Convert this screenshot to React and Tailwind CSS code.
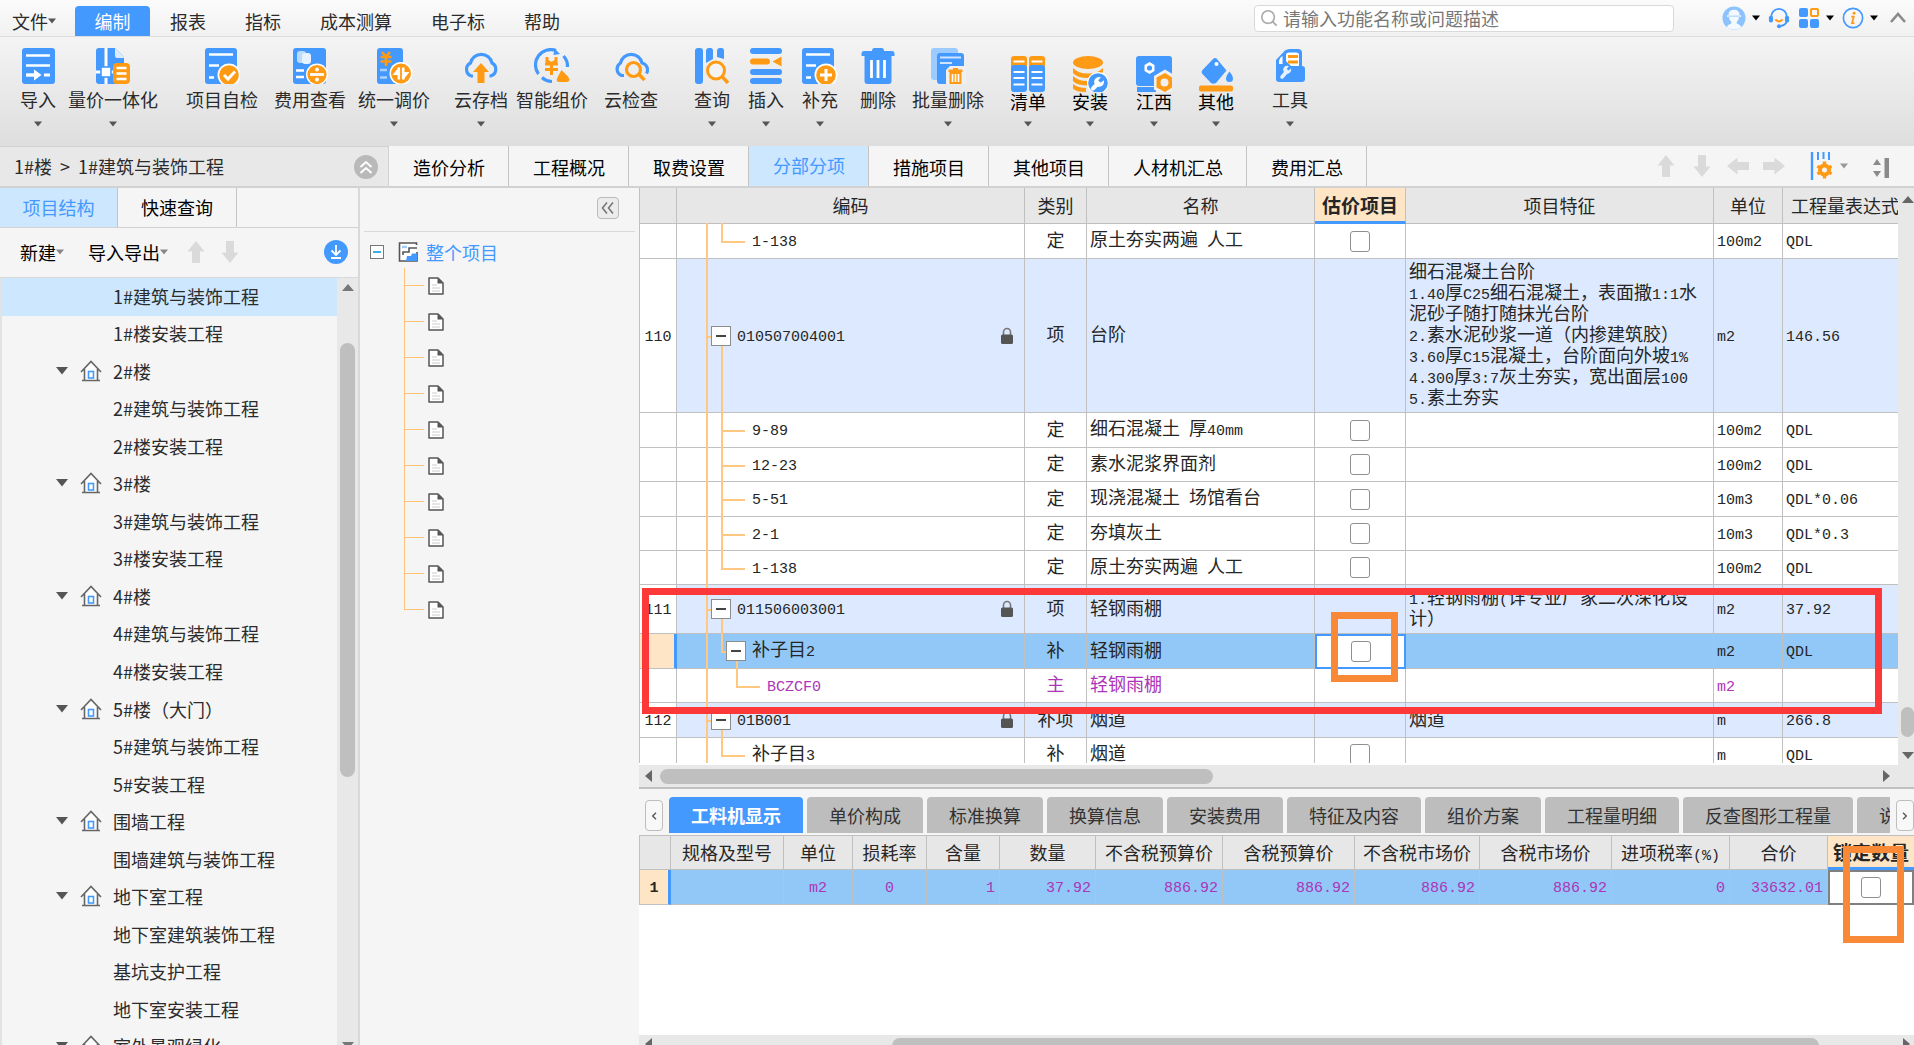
import React from "react";

const B = "#4499ff";
const O = "#ff9a14";

/* ---------- ribbon icons ---------- */
const Svg = ({ children }) => (
  <svg viewBox="0 0 36 36" className="block h-9 w-9 shrink-0" aria-hidden="true">{children}</svg>
);
const W = (d, w = 2.4, c = "#fff") => <path d={d} stroke={c} strokeWidth={w} fill="none" />;

const icons = {
  import: (
    <Svg>
      <rect x="2" y="0" width="33" height="36" rx="3" fill={B} />
      {W("M6 7.5H30M6 17.5H30")}
      {W("M6 27H14", 3.4)}
      {W("M24 27H30", 3)}
      <path d="M14 21.5L21.5 27L14 32.5Z" fill="#fff" />
    </Svg>
  ),
  integrate: (
    <Svg>
      <path d="M4 0H20L29 9V36H4Q1 36 1 33V3Q1 0 4 0Z" fill={B} />
      <path d="M20 0L30 10H22Q20 10 20 8Z" fill="#dcecff" />
      {W("M11 0V36M1 24H20", 3)}
      <rect x="6" y="19" width="10" height="10" fill="#fff" stroke={B} strokeWidth="1.6" />
      <rect x="18" y="15" width="17" height="21" rx="4" fill={O} />
      {W("M21.5 20H31.500M21.5 25.500H31.500M21.5 31H31.500", 2.6)}
    </Svg>
  ),
  check: (
    <Svg>
      <rect x="1" y="0" width="32" height="36" rx="3" fill={B} />
      {W("M5 6.500H29M5 17.500H15M5 29.500H10")}
      <circle cx="25" cy="27" r="11.500" fill="#fff" />
      <circle cx="25" cy="27" r="9.800" fill={O} />
      {W("M20 27L24 31L31 23.500", 3)}
    </Svg>
  ),
  fee: (
    <Svg>
      <rect x="1" y="0" width="33" height="36" rx="3" fill={B} />
      <rect x="5" y="3" width="9" height="12" rx="3" fill="#bcdcff" />
      <rect x="10" y="5" width="9" height="11" rx="3" fill="#e6f2ff" />
      {W("M4 22.500H12M4 29H12", 2.600)}
      <circle cx="25" cy="26.500" r="11" fill="#fff" />
      <circle cx="25" cy="26.500" r="9.600" fill={O} />
      {W("M18 26.500H32", 2.800)}
      <circle cx="25" cy="21.500" r="1.900" fill="#fff" />
      <circle cx="25" cy="31.500" r="1.900" fill="#fff" />
    </Svg>
  ),
  adjust: (
    <Svg>
      <rect x="1" y="0" width="26" height="36" rx="3" fill={B} />
      {W("M6 4L10 8.500L14 4M4.500 9H15.500M4.500 13.500H15.500M10 8V18", 2.600, O)}
      {W("M4 22H11M4 29.500H11", 2.400, "#a9d2ff")}
      <circle cx="25" cy="25.500" r="11.500" fill="#fff" />
      <circle cx="25" cy="25.500" r="10" fill={O} />
      {W("M22.800 19.500V31.500M27.200 19.500V31.500", 2.600)}
      <path d="M23 19L16.500 27H23ZM27 32L33.500 24H27Z" fill="#fff" />
    </Svg>
  ),
  cloudUp: (
    <Svg>
      <path d="M10 28.500H8.500A7 7 0 0 1 7.500 15.500A11 11 0 0 1 29 15.500A7 7 0 0 1 27.500 28.500H26.500" stroke={B} strokeWidth="3.200" fill="none" transform="translate(0 -0.500)" />
      <path d="M18 15L26 24H21.500V35H14.500V24H10Z" fill={O} />
    </Svg>
  ),
  smart: (
    <Svg>
      <path d="M4.500 26A15.300 15.300 0 0 1 22 2.500" stroke={B} strokeWidth="3.200" fill="none" />
      <path d="M20.500 0.500L26 6L19.500 7Z" fill={B} />
      <path d="M29.500 8A15 15 0 0 1 33.500 19M18 33.500A15 15 0 0 1 8 29.500" stroke={B} strokeWidth="3.200" fill="none" />
      {W("M13 9V13L17.500 15.500L22 13V9M11 16H24M11 21.500H24M17.500 15V27", 3, O)}
      <path d="M27.500 22L34 28.500Q37.500 33.500 33 34H25Q21 33.500 24 28.500Z" fill={O} />
    </Svg>
  ),
  cloudSearch: (
    <Svg>
      <path d="M11 28H8.500A7 7 0 0 1 7.500 15.500A11 11 0 0 1 29 15.500A7 7 0 0 1 33.500 26" stroke={B} strokeWidth="3.200" fill="none" transform="translate(0 -0.500)" />
      <circle cx="20.500" cy="21.500" r="7" stroke={O} strokeWidth="3.200" fill="none" />
      {W("M26 26.500L31.500 32", 3.600, O)}
    </Svg>
  ),
  query: (
    <Svg>
      <rect x="1" y="0" width="8" height="36" rx="3" fill={B} />
      <path d="M12 3Q12 0 15 0H16.500Q19 0 19 3V11L12 15Z" fill={B} />
      <path d="M23 3Q23 0 26 0H27.500Q30 0 30 3V11L23 9Z" fill={B} />
      <circle cx="22" cy="22.500" r="8.500" stroke={O} strokeWidth="3" fill="#f3f3f3" />
      {W("M28 28.500L34 35", 3.400, O)}
    </Svg>
  ),
  insert: (
    <Svg>
      {[0, 21, 30].map((y) => <rect key={y} x="2" y={y} width="32" height="6" rx="3" fill={B} />)}
      <rect x="2" y="10.500" width="20" height="6" rx="3" fill={O} />
      <path d="M24.500 13.500L33.500 8.500V18.500Z" fill={O} />
    </Svg>
  ),
  supplement: (
    <Svg>
      <rect x="0" y="0" width="32" height="36" rx="3" fill={B} />
      {W("M4 6.500H28M4 17.500H14M4 29.500H9")}
      <circle cx="24" cy="27" r="11.500" fill="#fff" />
      <circle cx="24" cy="27" r="9.800" fill={O} />
      {W("M18 27H30M24 21V33", 3)}
    </Svg>
  ),
  trash: (
    <Svg>
      <path d="M1.500 6Q1.500 3 4 3H12Q12 0 14.500 0H21.500Q24 0 24 3H32Q34.500 3 34.500 6V8H31.500V33Q31.500 36 28.500 36H7.500Q4.500 36 4.500 33V8H1.500Z" fill={B} />
      {W("M11.500 12V30M18 12V30M24.500 12V30", 2.800)}
    </Svg>
  ),
  batch: (
    <Svg>
      <rect x="1" y="0" width="27" height="32" rx="3" fill="#9ccbff" />
      <rect x="7" y="5" width="27" height="31" rx="3" fill={B} />
      {W("M10 9.500H31M10 15H22", 2.200, "#cfe5ff")}
      <path d="M16 36V22L20 18H36V36Z" fill="#f0f0f0" />
      <path d="M18.500 21.500H23V20H28V21.500H32.500V24H31.500V36H19.500V24H18.500Z" fill={O} />
      {W("M22.500 26V34M25.500 26V34M28.500 26V34", 1.700)}
    </Svg>
  ),
  list: (
    <Svg>
      {[1, 19].map((x) => (
        <g key={x}>
          <rect x={x} y="0" width="16" height="14" rx="3" fill={O} />
          <rect x={x} y="9" width="16" height="27" rx="3" fill={B} />
          <path d={`M${x + 2.500} 5.500H${x + 13.500}M${x + 2.500} 16H${x + 13.500}M${x + 2.500} 22H${x + 13.500}M${x + 2.500} 28.500H${x + 13.500}`} stroke="#fff" strokeWidth="2.200" />
        </g>
      ))}
    </Svg>
  ),
  install: (
    <Svg>
      <ellipse cx="16" cy="6.500" rx="15" ry="6.500" fill={O} />
      <path d="M1 12Q6 17.500 16 17.500Q26 17.500 31 12V16Q26 22 16 22Q5 22 1 17ZM1 20Q6 25 15 25V29.500Q4 29 1 25ZM1 28Q6 32 14 32V36Q4 36 1 32.500Z" fill={O} />
      <circle cx="26" cy="27" r="11" fill="#fff" />
      <circle cx="26" cy="27" r="9.800" fill={B} />
      <path d="M21 32.500L26 27.500" stroke="#fff" strokeWidth="4" strokeLinecap="round" />
      <path d="M31.800 24.200L28.600 26.800L26.200 24.400L28.800 21.200A5 5 0 1 0 31.800 24.200Z" fill="#fff" />
    </Svg>
  ),
  jiangxi: (
    <Svg>
      <path d="M3 0H33Q36 0 36 3V30H3Q0 30 0 27V3Q0 0 3 0Z" fill={B} />
      <path d="M1 33.500H20" stroke={B} strokeWidth="5" />
      <path d="M13.500 6L18.500 9V15L13.500 18L8.500 15V9Z" fill="#fff" />
      <circle cx="13.500" cy="12" r="2.600" fill={B} />
      <path d="M29 13.500L40 20V33.500L29 40L18 33.500V20Z" fill="#f0f0f0" />
      <path d="M29 17L36 21.500V31.500L29 36L20.500 31.500V21.500Z" fill={O} />
      <circle cx="28.500" cy="26.500" r="4" fill="#f0f0f0" />
    </Svg>
  ),
  other: (
    <Svg>
      <path d="M15.500 2.500Q17 1.500 18.500 2.500L28.500 14.500L18 27Q15.500 28.500 13 27L4 17.500Q3 15.500 4.500 14Z" fill={B} />
      <circle cx="18.500" cy="8" r="2" fill="#fff" />
      <path d="M31.500 15.500Q35 20 35 22.500A3.500 3.500 0 0 1 28 22.500Q28 20 31.500 15.500Z" fill={B} />
      <rect x="1" y="29.500" width="34" height="6" rx="2" fill={O} />
    </Svg>
  ),
  tool: (
    <Svg>
      <path d="M4 12L13 2.500Q15 1 18 1H26Q30 1 30 5V18Q33 18 33 21V31Q33 34 30 34H7Q4 34 4 31Z" fill={B} />
      <path d="M14 7Q14 4.500 17 4.500H24Q27 4.500 27 7V18H19L14 13Z" fill="#fff" />
      <path d="M16 8.500H26M16 14H26" stroke={O} strokeWidth="2.800" />
      <path d="M7 14Q7 10 10.500 8V16H7Z" fill="#fff" />
      <path d="M10 29L14 24.500" stroke="#e4f1ff" strokeWidth="3.600" strokeLinecap="round" />
      <path d="M19 20.500L16.500 22.500L14.800 21L16.800 18A4 4 0 1 0 19 20.500Z" fill="#e4f1ff" />
    </Svg>
  ),
};

const Down = ({ className = "text-[#555]" }) => (
  <svg viewBox="0 0 10 6" className={`block h-1.5 w-2 shrink-0 ${className}`} aria-hidden="true">
    <path d="M0 0H10L5 6Z" fill="currentColor" />
  </svg>
);

const Arrow = ({ dir }) => {
  const d = { up: 0, right: 90, down: 180, left: 270 }[dir];
  return (
    <svg viewBox="0 0 24 24" className="block h-6 w-6" aria-hidden="true">
      <path d="M12 1L20.500 11.500H16V23H8V11.500H3.500Z" fill="#dadada" transform={`rotate(${d} 12 12)`} />
    </svg>
  );
};

/* Grid cells set Latin runs in a half-width face next to full-width Chinese. */
const Mx = ({ t }) =>
  t.split(/([\x20-\x7e]+)/).map((s, i) =>
    i % 2 ? <span key={i} className="whitespace-pre font-['Liberation_Mono',monospace] text-[15px] leading-none">{s}</span> : s
  );

/* ---------- data ---------- */
const menus = ["报表", "指标", "成本测算", "电子标", "帮助"];

const ribbon = [
  ["导入", "import", "ml-5", true],
  ["量价一体化", "integrate", "ml-3", true],
  ["项目自检", "check", "ml-7", false],
  ["费用查看", "fee", "ml-4", false],
  ["统一调价", "adjust", "ml-3", true],
  ["云存档", "cloudUp", "ml-6", true],
  ["智能组价", "smart", "ml-2", false],
  ["云检查", "cloudSearch", "ml-4", false],
  ["查询", "query", "ml-9", true],
  ["插入", "insert", "ml-[18px]", true],
  ["补充", "supplement", "ml-[18px]", true],
  ["删除", "trash", "ml-[22px]", false],
  ["批量删除", "batch", "ml-4", true],
  ["清单", "list", "ml-[26px]", true, true],
  ["安装", "install", "ml-[26px]", true, true],
  ["江西", "jiangxi", "ml-7", true, true],
  ["其他", "other", "ml-[26px]", true, true],
  ["工具", "tool", "ml-[38px]", true],
];

const tabs = ["造价分析", "工程概况", "取费设置", "分部分项", "措施项目", "其他项目", "人材机汇总", "费用汇总"];

const tree = [
  [1, "1#建筑与装饰工程"], [1, "1#楼安装工程"],
  [0, "2#楼"], [1, "2#建筑与装饰工程"], [1, "2#楼安装工程"],
  [0, "3#楼"], [1, "3#建筑与装饰工程"], [1, "3#楼安装工程"],
  [0, "4#楼"], [1, "4#建筑与装饰工程"], [1, "4#楼安装工程"],
  [0, "5#楼（大门）"], [1, "5#建筑与装饰工程"], [1, "5#安装工程"],
  [0, "围墙工程"], [1, "围墙建筑与装饰工程"],
  [0, "地下室工程"], [1, "地下室建筑装饰工程"], [1, "基坑支护工程"], [1, "地下室安装工程"],
  [0, "室外景观绿化"],
];

/* kind: item (list item), sub (quota), last (final quota), subItem (expandable quota), leaf (main material) */
const rows = [
  { h: "h-[35px]", kind: "last", code: "1-138", type: "定", name: "原土夯实两遍 人工", unit: "100m2", qty: "QDL", box: true },
  {
    h: "h-[154px]", no: "110", kind: "item", code: "010507004001", type: "项", name: "台阶", unit: "m2", qty: "146.56",
    feat: ["细石混凝土台阶", "1.40厚C25细石混凝土，表面撒1:1水", "泥砂子随打随抹光台阶", "2.素水泥砂浆一道（内掺建筑胶）", "3.60厚C15混凝土，台阶面向外坡1%", "4.300厚3:7灰土夯实，宽出面层100", "5.素土夯实"],
  },
  { h: "h-[35px]", kind: "sub", code: "9-89", type: "定", name: "细石混凝土 厚40mm", unit: "100m2", qty: "QDL", box: true },
  { h: "h-[34px]", kind: "sub", code: "12-23", type: "定", name: "素水泥浆界面剂", unit: "100m2", qty: "QDL", box: true },
  { h: "h-[35px]", kind: "sub", code: "5-51", type: "定", name: "现浇混凝土 场馆看台", unit: "10m3", qty: "QDL*0.06", box: true },
  { h: "h-[34px]", kind: "sub", code: "2-1", type: "定", name: "夯填灰土", unit: "10m3", qty: "QDL*0.3", box: true },
  { h: "h-[34px]", kind: "last", code: "1-138", type: "定", name: "原土夯实两遍 人工", unit: "100m2", qty: "QDL", box: true },
  { h: "h-[49px]", no: "111", kind: "item", code: "011506003001", type: "项", name: "轻钢雨棚", unit: "m2", qty: "37.92", feat: ["1.轻钢雨棚(详专业厂家二次深化设", "计）"] },
  { h: "h-[35px]", kind: "subItem", code: "补子目2", type: "补", name: "轻钢雨棚", unit: "m2", qty: "QDL", box: true, selected: true },
  { h: "h-[34px]", kind: "leaf", code: "BCZCF0", type: "主", name: "轻钢雨棚", unit: "m2", qty: "" },
  { h: "h-[35px]", no: "112", kind: "item", code: "01B001", type: "补项", name: "烟道", unit: "m", qty: "266.8", feat: ["烟道"] },
  { h: "h-[34px]", kind: "last", code: "补子目3", type: "补", name: "烟道", unit: "m", qty: "QDL", box: true },
];

const detailTabs = ["工料机显示", "单价构成", "标准换算", "换算信息", "安装费用", "特征及内容", "组价方案", "工程量明细", "反查图形工程量", "说明信息"];

const detailCols = [
  ["规格及型号", "", "text-center"],
  ["单位", "m2", "text-center"],
  ["损耗率", "0", "text-center"],
  ["含量", "1", "text-right"],
  ["数量", "37.92", "text-right"],
  ["不含税预算价", "886.92", "text-right"],
  ["含税预算价", "886.92", "text-right"],
  ["不含税市场价", "886.92", "text-right"],
  ["含税市场价", "886.92", "text-right"],
  ["进项税率(%)", "0", "text-right"],
  ["合价", "33632.01", "text-right"],
];

/* ---------- grid pieces ---------- */
const Line = ({ className }) => <span className={`absolute bg-[#ffc77f] ${className}`} />;

const Toggle = ({ className }) => (
  <button aria-label="折叠" className={`absolute top-1/2 flex h-5 w-5 -translate-y-1/2 items-center justify-center border border-[#8c8c8c] bg-white ${className}`}>
    <span className="h-0.5 w-2.5 bg-[#444]" />
  </button>
);

const textPad = { item: "pl-[60px]", sub: "pl-[75px]", last: "pl-[75px]", subItem: "pl-[75px]", leaf: "pl-[90px]" };

function CodeCell({ row }) {
  const k = row.kind;
  return (
    <div className={`flex items-center justify-between pr-2.5 ${textPad[k]}`}>
      <Line className="-top-px bottom-0 left-[29px] w-0.5" />
      {k === "item" && (
        <>
          <Line className="left-[29px] top-1/2 h-0.5 w-1.5" />
          <Line className="bottom-0 left-11 top-1/2 w-0.5" />
          <Toggle className="left-[34px]" />
        </>
      )}
      {k === "sub" && <Line className="-top-px bottom-0 left-11 w-0.5" />}
      {(k === "last" || k === "subItem") && <Line className="-top-px bottom-1/2 left-11 w-0.5" />}
      {(k === "sub" || k === "last") && <Line className="left-11 top-1/2 h-0.5 w-6" />}
      {k === "subItem" && (
        <>
          <Line className="left-11 top-1/2 h-0.5 w-1.5" />
          <Line className="bottom-0 left-[59px] top-1/2 w-0.5" />
          <Toggle className="left-[49px]" />
        </>
      )}
      {k === "leaf" && (
        <>
          <Line className="-top-px bottom-1/2 left-[59px] w-0.5" />
          <Line className="left-[59px] top-1/2 h-0.5 w-6" />
        </>
      )}
      <span className="pb-1"><Mx t={row.code} /></span>
      {k === "item" && (
        <svg viewBox="0 0 14 18" className="h-[18px] w-3.5" aria-label="锁定">
          <path d="M3.500 8V5A3.500 3.500 0 0 1 10.500 5V8" stroke="#777" strokeWidth="1.600" fill="none" />
          <rect x="1" y="7.500" width="12" height="9.500" rx="1.500" fill="#555" />
        </svg>
      )}
    </div>
  );
}

const Check = ({ label }) => (
  <input type="checkbox" aria-label={label} className="block h-[21px] w-5 shrink-0 appearance-none rounded-[3px] border border-[#8f8f8f] bg-white" />
);

function MainGrid() {
  const head = "relative border-b border-r border-[#c0c0c0] p-0 font-normal";
  const plain = "relative border-b border-r border-[#c0c0c0] p-0";
  const text = "relative border-b border-r border-[#c0c0c0] p-0 pb-1";
  return (
    <table className="w-full table-fixed border-separate border-spacing-0 border-l border-[#c0c0c0] text-[18px] leading-[21px] text-[#262626]">
      <colgroup>
        <col className="w-[37px]" /><col className="w-[348px]" /><col className="w-[62px]" /><col className="w-[228px]" />
        <col className="w-[91px]" /><col className="w-[308px]" /><col className="w-[69px]" /><col />
      </colgroup>
      <thead>
        <tr className="h-9 bg-[#e7e7e7]">
          {["", "编码", "类别", "名称"].map((h) => <th key={h} scope="col" className={head}>{h}</th>)}
          <th scope="col" className="relative whitespace-nowrap border-b-3 border-r border-b-[#4499ff] border-r-[#c0c0c0] bg-[#fee5c6] p-0 text-[19px] font-bold">估价项目</th>
          <th scope="col" className={head}>项目特征</th>
          <th scope="col" className={head}>单位</th>
          <th scope="col" className="overflow-hidden whitespace-nowrap border-b border-[#c0c0c0] p-0 pl-2 text-left font-normal">工程量表达式</th>
        </tr>
      </thead>
      <tbody>
        {rows.map((r, i) => (
          <tr key={i} className={`${r.h} ${r.kind === "item" ? "bg-[#dce9fe]" : r.selected ? "bg-[#92c8f7]" : "bg-white"} ${r.kind === "leaf" ? "text-[#ac35b8]" : ""}`}>
            <td className={r.selected ? "border-b border-r-3 border-b-[#c0c0c0] border-r-[#4499ff] bg-[#fee5c6] p-0" : `${text} bg-white text-center`}>
              {r.no && <Mx t={r.no} />}
            </td>
            <td className={plain}><CodeCell row={r} /></td>
            <td className={`${text} text-center`}>{r.type}</td>
            <td className={`${text} whitespace-nowrap pl-[3px]`}><Mx t={r.name} /></td>
            <td className={r.selected ? "relative border-2 border-[#4499ff] bg-white p-0" : plain}>
              {r.box && <div className="flex justify-center"><Check label={`估价项目 ${r.name}`} /></div>}
              {r.selected && <span className="pointer-events-none absolute -top-6 right-1.5 z-10 h-[70px] w-[67px] border-[7px] border-[#f88937]" />}
            </td>
            <td className={`${text} pl-[3px]`}>
              {r.feat && r.feat.map((f) => <div key={f} className="h-[21px] whitespace-nowrap"><Mx t={f} /></div>)}
            </td>
            <td className={`${text} pl-[3px]`}><Mx t={r.unit} /></td>
            <td className="border-b border-[#c0c0c0] p-0 pb-1 pl-[3px]"><Mx t={r.qty} /></td>
          </tr>
        ))}
      </tbody>
    </table>
  );
}

function DetailGrid() {
  const cell = "border-b border-r border-[#c0c0c0] p-0";
  return (
    <table className="w-full table-fixed border-separate border-spacing-0 border-l border-t border-[#c0c0c0] text-[18px] leading-[21px] text-[#262626]">
      <colgroup>
        <col className="w-[31px]" /><col className="w-[113px]" /><col className="w-[69px]" /><col className="w-[74px]" /><col className="w-[73px]" />
        <col className="w-24" /><col className="w-[127px]" /><col className="w-[132px]" /><col className="w-[125px]" /><col className="w-[132px]" />
        <col className="w-[118px]" /><col className="w-[98px]" /><col />
      </colgroup>
      <thead>
        <tr className="h-[34px] bg-[#e7e7e7]">
          <th scope="col" aria-label="序号" className={cell} />
          {detailCols.map(([h]) => <th key={h} scope="col" className={`${cell} whitespace-nowrap font-normal`}><Mx t={h} /></th>)}
          <th scope="col" className="whitespace-nowrap border-b-3 border-[#4499ff] bg-[#fee5c6] p-0 text-[19px] font-bold">锁定数量</th>
        </tr>
      </thead>
      <tbody>
        <tr className="h-[35px] bg-[#92c8f7]">
          <th scope="row" className="border-b border-r-3 border-b-[#c0c0c0] border-r-[#4499ff] bg-[#fee5c6] p-0 pb-1 font-bold"><Mx t="1" /></th>
          {detailCols.map(([h, v, al]) => <td key={h} className={`border-b border-r border-[#c0c0c0] px-1 pb-1 pt-0 ${al} text-[#ac35b8]`}><Mx t={v} /></td>)}
          <td className="relative border-2 border-[#808080] bg-white p-0">
            <div className="flex justify-center"><Check label="锁定数量" /></div>
            <span className="pointer-events-none absolute -top-[26px] right-2 z-10 h-[97px] w-[61px] border-[7px] border-[#f88937]" />
          </td>
        </tr>
      </tbody>
    </table>
  );
}

/* ---------- page sections ---------- */
function TopBar() {
  return (
    <header className="flex h-[37px] shrink-0 items-end border-b border-[#dcdcdc] bg-gradient-to-b from-[#fbfbfb] to-[#f1f1f1] pl-3">
      <nav className="flex items-end">
        <button className="flex h-[30px] w-[63px] items-center"><span>文件</span><Down /></button>
        <button className="h-[30px] w-[75px] rounded-t bg-[#4499ff] text-white">编制</button>
        <div className="ml-5 flex gap-[39px]">
          {menus.map((m) => <button key={m} className="h-[30px]">{m}</button>)}
        </div>
      </nav>
      <label className="ml-auto mr-12 flex h-[27px] w-[420px] items-center gap-1 self-center rounded border border-[#d9d9d9] bg-white px-1">
        <svg viewBox="0 0 20 20" className="h-[18px] w-5 shrink-0" aria-hidden="true">
          <circle cx="9" cy="9" r="7" stroke="#aaa" strokeWidth="1.800" fill="none" />
          <path d="M14 14L18.500 18.500" stroke="#aaa" strokeWidth="2" />
        </svg>
        <input type="text" aria-label="搜索" placeholder="请输入功能名称或问题描述" className="min-w-0 flex-1 bg-transparent outline-none placeholder:text-[#777]" />
      </label>
      <div className="mr-2 flex items-center gap-2 self-center text-black">
        <button aria-label="账户" className="flex items-center gap-1.5">
          <svg viewBox="0 0 26 26" className="h-6 w-6"><circle cx="13" cy="13" r="12.500" fill="#8cc3ff" /><path d="M7 10Q7 4 13 4Q19 4 19 10H20.500V12H18.500Q18 16 16 17V19Q20 20 21 23Q17 25.500 13 25.500Q9 25.500 5 23Q6 20 10 19V17Q8 16 7.500 12H5.500V10Z" fill="#f4f9ff" /><path d="M7 11H19" stroke="#a9d2ff" strokeWidth="1.200" /></svg>
          <Down className="text-black" />
        </button>
        <button aria-label="客服">
          <svg viewBox="0 0 24 24" className="h-[22px] w-[22px]"><path d="M3.500 12V10.500A8.500 8.500 0 0 1 20.500 10.500V14Q20.500 20 13 21" stroke={B} strokeWidth="2" fill="none" /><rect x="1" y="9.500" width="4.500" height="7.500" rx="2" fill={B} /><rect x="18.500" y="9.500" width="4.500" height="7.500" rx="2" fill={B} /><circle cx="12" cy="21" r="2.200" fill={B} /><path d="M8 13.500Q12 18 16 13.500" stroke={O} strokeWidth="2.400" fill="none" /></svg>
        </button>
        <button aria-label="应用" className="flex items-center gap-1.5">
          <svg viewBox="0 0 22 22" className="h-[22px] w-[22px]"><rect x="1" y="1" width="9" height="9" rx="2" fill={B} /><rect x="1" y="12" width="9" height="9" rx="2" fill={B} /><rect x="12" y="12" width="9" height="9" rx="2" fill={B} /><rect x="13" y="2" width="7" height="7" rx="1" fill="none" stroke={O} strokeWidth="2" /></svg>
          <Down className="text-black" />
        </button>
        <button aria-label="信息" className="flex items-center gap-1.5">
          <svg viewBox="0 0 24 24" className="h-[22px] w-[22px]"><circle cx="12" cy="12" r="10.500" stroke={B} strokeWidth="1.800" fill="none" /><circle cx="13.200" cy="6.800" r="1.600" fill={O} /><path d="M10 10.500H12.800L11 17.500H13.500" stroke={O} strokeWidth="2" fill="none" /></svg>
          <Down className="text-black" />
        </button>
        <button aria-label="收起">
          <svg viewBox="0 0 16 16" className="ml-1 h-4 w-4"><path d="M1 12L8 4L15 12" stroke="#8a8a8a" strokeWidth="2.600" fill="none" /></svg>
        </button>
      </div>
    </header>
  );
}

function Ribbon() {
  return (
    <div className="flex h-[109px] shrink-0 items-start overflow-hidden bg-gradient-to-b from-[#f4f4f4] to-[#dedede] pt-[11px]">
      {ribbon.map(([label, icon, gap, menu, dark]) => (
        <button key={label} className={`flex shrink-0 flex-col items-center ${gap} ${dark ? "text-black" : ""}`}>
          <span className={dark ? "h-[39px] pt-2" : "h-[39px]"}>{icons[icon]}</span>
          <span className={`relative whitespace-nowrap leading-6 ${dark ? "mt-0.5" : ""}`}>{label}</span>
          {menu && <span className={dark ? "mt-2" : "mt-2.5"}><Down /></span>}
        </button>
      ))}
    </div>
  );
}

function TabRow() {
  return (
    <div className="flex h-[42px] shrink-0 border-b-2 border-[#d2d2d2] bg-[#f5f5f5]">
      <div className="flex w-[389px] shrink-0 items-center justify-between border-r border-t border-[#d2d2d2] bg-[#e8e8e8] pl-3.5 pr-2.5">
        <div className="flex gap-2 pb-0.5">
          <span>1#楼</span><span>&gt;</span><span>1#建筑与装饰工程</span>
        </div>
        <button aria-label="折叠路径" className="flex h-6 w-6 items-center justify-center rounded-full bg-[#b9b9b9]">
          <svg viewBox="0 0 16 16" className="h-4 w-4"><path d="M2.500 8L8 3L13.500 8M2.500 14L8 9L13.500 14" stroke="#fff" strokeWidth="2" fill="none" /></svg>
        </button>
      </div>
      <div className="flex">
        {tabs.map((t, i) => (
          <button key={t} className={`whitespace-nowrap border-r border-[#c4c4c4] pl-6 pr-[23px] ${i === 3 ? "bg-[#cce7fe] pb-0.5 text-[#4499ff]" : "pt-0.5 text-black"}`}>{t}</button>
        ))}
      </div>
      <div className="ml-auto flex items-center gap-3 pr-6">
        {["up", "down", "left", "right"].map((d) => <button key={d} aria-label={d}><Arrow dir={d} /></button>)}
        <button aria-label="列设置" className="ml-3 flex items-center gap-2">
          <svg viewBox="0 0 22 28" className="h-7 w-[22px]"><path d="M2 0V28" stroke={B} strokeWidth="2.400" /><path d="M8 0V8M13.500 0V7M19 0V8" stroke={B} strokeWidth="2" /><circle cx="14.500" cy="18" r="4.500" fill="none" stroke={O} strokeWidth="4" /><path d="M14.500 9.500V12M14.500 24V26.500M7.500 14L9.500 15.500M19.500 20.500L21.500 22M7.500 22L9.500 20.500M19.500 15.500L21.500 14" stroke={O} strokeWidth="3.400" /></svg>
          <Down className="text-[#999]" />
        </button>
        <button aria-label="行高" className="ml-3 mt-1">
          <svg viewBox="0 0 18 24" className="h-6 w-[18px]"><path d="M1 9L5 3L9 9ZM1 15L5 21L9 15Z" fill="#8a8a8a" /><rect x="12.500" y="2" width="4.500" height="20" fill="#8a8a8a" /></svg>
        </button>
      </div>
    </div>
  );
}

function Sidebar() {
  return (
    <aside className="flex w-[360px] shrink-0 flex-col border-r-2 border-[#d9d9d9]">
      <div className="flex h-10 shrink-0 border-b border-[#d2d2d2] text-black">
        <button className="w-[118px] border-r border-[#c4c4c4] bg-[#cce7fe] pb-0.5 text-[#4499ff]">项目结构</button>
        <button className="w-[119px] border-r border-[#c4c4c4] pb-0.5">快速查询</button>
      </div>
      <div className="flex h-[50px] shrink-0 items-center border-b border-[#d9d9d9] pb-0.5 pl-5 pr-2.5 text-black">
        <button className="flex items-center">新建<Down className="text-[#888]" /></button>
        <button className="ml-6 flex items-center">导入导出<Down className="text-[#888]" /></button>
        <button aria-label="上移" className="ml-4"><Arrow dir="up" /></button>
        <button aria-label="下移" className="ml-2.5"><Arrow dir="down" /></button>
        <button aria-label="下载" className="ml-auto flex h-6 w-6 items-center justify-center rounded-full bg-[#4499ff]">
          <svg viewBox="0 0 16 16" className="h-4 w-4"><path d="M8 1V11M3.500 6.500L8 11L12.500 6.500M3 14H13" stroke="#fff" strokeWidth="1.800" fill="none" /></svg>
        </button>
      </div>
      <div className="flex min-h-0 flex-1 overflow-hidden">
        <ul className="grid h-[788px] flex-1 auto-rows-fr border-l-2 border-[#e2e2e2]">
          {tree.map(([lvl, t], i) => (
            <li key={t} className={`flex items-center pb-0.5 ${i === 0 ? "bg-[#cce7fe]" : ""} ${lvl ? "pl-[111px]" : "pl-[54px]"}`}>
              {!lvl && (
                <>
                  <svg viewBox="0 0 12 8" className="h-2 w-3" aria-hidden="true"><path d="M0 0H12L6 7.500Z" fill="#555" /></svg>
                  <svg viewBox="0 0 22 22" className="ml-3 mr-[11px] h-[22px] w-[22px]" aria-hidden="true">
                    <path d="M4.500 10V20.500H17.500V10L11 3Z" fill="#fff" />
                    <path d="M1 12L11 1.500L21 12M4.500 9V20.500M17.500 9V20.500M2 20.500H20" stroke="#666" strokeWidth="1.600" fill="none" />
                    <rect x="8.500" y="11.500" width="5" height="6.500" stroke={B} strokeWidth="1.600" fill="#fff" />
                  </svg>
                </>
              )}
              <span className="whitespace-nowrap">{t}</span>
            </li>
          ))}
        </ul>
        <div className="flex w-[21px] flex-col items-center bg-[#e8e8e8] pt-1.5">
          <svg viewBox="0 0 12 7" className="h-[7px] w-3 shrink-0" aria-hidden="true"><path d="M0 7H12L6 0Z" fill="#777" /></svg>
          <div className="mt-[52px] h-[434px] w-[15px] rounded-full bg-[#bfbfbf]" />
          <svg viewBox="0 0 12 7" className="mb-[-4px] mt-auto h-[7px] w-3 shrink-0" aria-hidden="true"><path d="M0 0H12L6 7Z" fill="#777" /></svg>
        </div>
      </div>
    </aside>
  );
}

function ProjectTree() {
  return (
    <section className="flex w-[279px] shrink-0 flex-col">
      <div className="mx-1 flex h-11 items-center justify-end border-b border-[#d9d9d9] pr-4">
        <button aria-label="收起面板" className="mb-1 flex h-[22px] w-[22px] items-center justify-center rounded border border-[#bbb] bg-[#ececec]">
          <svg viewBox="0 0 16 16" className="h-4 w-4"><path d="M7 2.500L2.500 8L7 13.500M13 2.500L8.500 8L13 13.500" stroke="#777" strokeWidth="1.600" fill="none" /></svg>
        </button>
      </div>
      <div className="flex h-9 items-center pl-2.5 pt-1">
        <button aria-label="折叠" className="flex h-3.5 w-3.5 items-center justify-center border border-[#777] bg-white"><span className="h-0.5 w-2 bg-[#3ab0e0]" /></button>
        <svg viewBox="0 0 20 20" className="ml-3.5 h-5 w-5" aria-hidden="true">
          <path d="M18.500 3V1H1.500V19H19V10" stroke="#555" strokeWidth="1.600" fill="#fff" />
          <path d="M4 5H9" stroke="#9ccbff" strokeWidth="2.400" />
          <path d="M5 13V10H11V6H19" stroke="#555" strokeWidth="1.600" fill="none" />
          <path d="M8 19L9 14H13L14 11.500H19V19Z" fill={B} />
        </svg>
        <span className="ml-2 text-[#4499ff]">整个项目</span>
      </div>
      <ul className="pl-11">
        {Array.from({ length: 10 }, (_, i) => (
          <li key={i} className="flex h-9">
            <div className="flex w-5 flex-col">
              <div className="h-[18px] border-b border-l border-[#ffc27a]" />
              {i < 9 && <div className="h-[18px] border-l border-[#ffc27a]" />}
            </div>
            <svg viewBox="0 0 16 18" className="ml-1 h-[18px] w-4 self-center" aria-hidden="true">
              <path d="M1 1H10L15 6V17H1Z" fill="#fff" stroke="#555" strokeWidth="1.500" strokeLinejoin="round" />
              <path d="M9.500 1V6.500H15Z" fill="#555" />
              <path d="M4 8H9M4 11H12M4 14H12" stroke="#ccc" strokeWidth="1" />
            </svg>
          </li>
        ))}
      </ul>
    </section>
  );
}

function Workspace() {
  return (
    <main className="flex min-w-0 flex-1 flex-col">
      <section className="flex min-h-0 flex-1 border-b-2 border-[#c0c0c0] bg-[#e8e8e8]">
        <div className="relative flex min-w-0 flex-1 flex-col">
          <div className="min-h-0 flex-1 overflow-hidden bg-white"><MainGrid /></div>
          <div className="flex h-6 shrink-0 items-center border-t-2 border-white pl-1.5 pr-2">
            <svg viewBox="0 0 7 12" className="h-3 w-[7px]" aria-hidden="true"><path d="M7 0V12L0 6Z" fill="#666" /></svg>
            <div className="ml-2 h-[15px] w-[553px] rounded-full bg-[#bfbfbf]" />
            <svg viewBox="0 0 7 12" className="ml-auto h-3 w-[7px]" aria-hidden="true"><path d="M0 0V12L7 6Z" fill="#666" /></svg>
          </div>
          <div className="pointer-events-none absolute left-[3px] right-4 top-[400px] z-10 h-[126px] border-[7px] border-[#fc3838]" />
        </div>
        <div className="flex w-4 shrink-0 flex-col items-end overflow-hidden pb-7 pt-2">
          <svg viewBox="0 0 12 7" className="h-[7px] w-3 shrink-0" aria-hidden="true"><path d="M0 7H12L6 0Z" fill="#666" /></svg>
          <div className="mb-[15px] mt-auto h-[30px] w-[13px] rounded-full bg-[#bfbfbf]" />
          <svg viewBox="0 0 12 7" className="h-[7px] w-3 shrink-0" aria-hidden="true"><path d="M0 0H12L6 7Z" fill="#666" /></svg>
        </div>
      </section>
      <section className="flex h-64 shrink-0 flex-col bg-white">
        <div className="flex h-[46px] shrink-0 items-end bg-[#f5f5f5] pb-0.5">
          <button aria-label="向左滚动" className="mb-0.5 ml-1.5 mr-1.5 flex h-[31px] w-[18px] shrink-0 items-center justify-center rounded border border-[#bdbdbd] bg-[#f8f8f8]">
            <svg viewBox="0 0 8 12" className="h-2 w-1.5"><path d="M7 1L2 6L7 11" stroke="#555" strokeWidth="2" fill="none" /></svg>
          </button>
          <div className="flex min-w-0 flex-1 gap-1 overflow-hidden">
            {detailTabs.map((t, i) => (
              <button key={t} className={`h-9 shrink-0 whitespace-nowrap rounded-t px-[22px] ${i === 0 ? "bg-[#4499ff] font-bold text-white" : "bg-[#bdbdbd] text-[#333]"}`}>{t}</button>
            ))}
          </div>
          <button aria-label="向右滚动" className="mb-0.5 ml-1.5 flex h-[31px] w-[18px] shrink-0 items-center justify-center rounded border border-[#bdbdbd] bg-[#f8f8f8]">
            <svg viewBox="0 0 8 12" className="h-2 w-1.5"><path d="M1 1L6 6L1 11" stroke="#555" strokeWidth="2" fill="none" /></svg>
          </button>
        </div>
        <DetailGrid />
        <div className="mt-auto flex h-2.5 items-start overflow-hidden bg-[#e8e8e8] pl-1.5 pr-1 pt-[3px]">
          <svg viewBox="0 0 7 12" className="h-3 w-[7px] shrink-0" aria-hidden="true"><path d="M7 0V12L0 6Z" fill="#666" /></svg>
          <div className="ml-60 h-4 w-[927px] shrink-0 rounded-full bg-[#bfbfbf]" />
          <svg viewBox="0 0 7 12" className="ml-auto h-3 w-[7px] shrink-0" aria-hidden="true"><path d="M0 0V12L7 6Z" fill="#666" /></svg>
        </div>
      </section>
    </main>
  );
}

export default function App() {
  return (
    <div className="flex h-screen flex-col overflow-hidden bg-[#f5f5f5] font-['Noto_Sans_CJK_SC',sans-serif] text-[18px] leading-6 text-[#2b2b2b]">
      <TopBar />
      <Ribbon />
      <TabRow />
      <div className="flex min-h-0 flex-1">
        <Sidebar />
        <ProjectTree />
        <Workspace />
      </div>
    </div>
  );
}
